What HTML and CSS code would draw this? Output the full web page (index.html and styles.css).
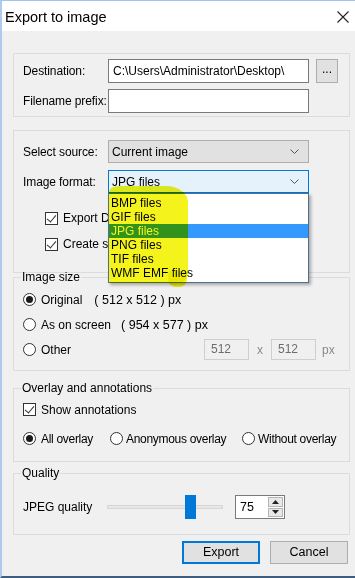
FILE: index.html
```html
<!DOCTYPE html>
<html lang="en">
<head>
    <meta charset="UTF-8">
    <title>Export to image</title>
    <link rel="stylesheet" href="styles.css">
</head>
<body>
    <div class="window">
        <div class="titlebar">
            <span class="title">Export to image</span>
            <svg class="close" width="12" height="12" viewBox="0 0 12 12"><path d="M0.5 0.5 L11.5 11.5 M11.5 0.5 L0.5 11.5" stroke="#222" stroke-width="1.1" fill="none"/></svg>
        </div>

        <div class="content">
            <div class="group g-dest">
                <div class="row">
                    <span class="label">Destination:</span>
                    <div class="field">C:\Users\Administrator\Desktop\</div>
                    <div class="btn-browse">...</div>
                </div>
                <div class="row">
                    <span class="label">Filename prefix:</span>
                    <div class="field"></div>
                </div>
            </div>

            <div class="group g-source">
                <div class="row">
                    <span class="label">Select source:</span>
                    <div class="combo">Current image<svg class="chev" width="9" height="5" viewBox="0 0 9 5"><path d="M0.5 0.5 L4.5 4.5 L8.5 0.5" stroke="#555" fill="none"/></svg></div>
                </div>
                <div class="row">
                    <span class="label">Image format:</span>
                    <div class="combo focus">JPG files<svg class="chev" width="9" height="5" viewBox="0 0 9 5"><path d="M0.5 0.5 L4.5 4.5 L8.5 0.5" stroke="#555" fill="none"/></svg></div>
                </div>
                <!-- the open list covers the rest of these two labels -->
                <div class="check-row first">
                    <span class="check on"></span><span class="check-text">Export D</span>
                </div>
                <div class="check-row">
                    <span class="check on"></span><span class="check-text">Create s</span>
                </div>
            </div>

            <fieldset class="group g-size">
                <legend>Image size</legend>
                <div class="opt-row">
                    <span class="radio on"></span><span class="opt-text">Original</span>
                    <span class="dims d1">( 512 x 512 ) px</span>
                </div>
                <div class="opt-row">
                    <span class="radio"></span><span class="opt-text">As on screen</span>
                    <span class="dims d2">( 954 x 577 ) px</span>
                </div>
                <div class="opt-row">
                    <span class="radio"></span><span class="opt-text">Other</span>
                    <div class="field small">512</div>
                    <span class="times">x</span>
                    <div class="field small">512</div>
                    <span class="unit">px</span>
                </div>
            </fieldset>

            <fieldset class="group g-overlay">
                <legend>Overlay and annotations</legend>
                <div class="opt-row">
                    <span class="check on"></span><span class="opt-text">Show annotations</span>
                </div>
                <div class="opt-row radios">
                    <span class="opt o1"><span class="radio on"></span>All overlay</span>
                    <span class="opt o2"><span class="radio"></span>Anonymous overlay</span>
                    <span class="opt o3"><span class="radio"></span>Without overlay</span>
                </div>
            </fieldset>

            <fieldset class="group g-quality">
                <legend>Quality</legend>
                <div class="opt-row">
                    <span class="q-label">JPEG quality</span>
                    <div class="slider"><span class="track"></span><span class="thumb"></span></div>
                    <div class="spin">
                        <span class="spin-val">75</span>
                        <span class="spin-btns">
                            <span class="spin-btn"><svg width="7" height="4" viewBox="0 0 7 4"><path d="M0 4 L3.5 0 L7 4 Z" fill="#222"/></svg></span>
                            <span class="spin-btn"><svg width="7" height="4" viewBox="0 0 7 4"><path d="M0 0 L3.5 4 L7 0 Z" fill="#222"/></svg></span>
                        </span>
                    </div>
                </div>
            </fieldset>

            <div class="buttons">
                <div class="btn default">Export</div>
                <div class="btn">Cancel</div>
            </div>
        </div>

        <ul class="dropdown">
            <li>BMP files</li>
            <li>GIF files</li>
            <li class="on">JPG files</li>
            <li>PNG files</li>
            <li>TIF files</li>
            <li>WMF EMF files</li>
        </ul>
        <div class="marker"></div>
        <div class="marker smear"></div>
    </div>
</body>
</html>
```

FILE: styles.css
```css
*{
    margin: 0;
    padding: 0;
    box-sizing: border-box;
    list-style-type: none;
}
body{
    font: 12px "Liberation Sans", Arial, sans-serif;
    color: #000;
}
.window{
    position: relative;
    width: 355px;
    height: 578px;
    border-top: 1px solid #a3c4ea;
    border-left: 2px solid #aecbee;
    border-bottom: 2px solid #3f5d7f;
    background-color: #f0f0f0;
    overflow: hidden;
}
.titlebar{
    display: flex;
    align-items: center;
    justify-content: space-between;
    height: 30px;
    padding: 2px 6px 0 3px;
    background-color: #fff;
}
.title{
    font-size: 14.5px;
}
.content{
    padding: 22px 5px 0 11px;
}
.group{
    border: 1px solid #dcdcdc;
    padding: 0 9px;
    min-width: 0;
}
.group legend{
    padding: 0 1px;
    margin-left: -2px;
    line-height: 12px;
}
.row{
    display: flex;
    align-items: center;
    height: 24px;
}
.label{
    flex: none;
    width: 85px;
    white-space: nowrap;
    letter-spacing: -0.1px;
}
.field{
    flex: none;
    width: 201px;
    height: 24px;
    padding: 0 4px;
    border: 1px solid #7a7a7a;
    background-color: #fff;
    line-height: 22px;
    white-space: nowrap;
    overflow: hidden;
}
.btn-browse{
    flex: none;
    width: 22px;
    height: 24px;
    margin-left: 7px;
    border: 1px solid #adadad;
    background-color: #e1e1e1;
    text-align: center;
    line-height: 18px;
}

/* group 1 */
.g-dest{
    height: 64px;
    padding-top: 5px;
}
.g-dest .row + .row{
    margin-top: 6px;
}

/* group 2 */
.g-source{
    height: 143px;
    margin-top: 13px;
    padding-top: 9px;
}
.g-source .row{
    height: 23px;
}
.g-source .row + .row{
    margin-top: 7px;
}
.combo{
    display: flex;
    align-items: center;
    justify-content: space-between;
    width: 201px;
    height: 23px;
    padding: 0 9px 0 3px;
    border: 1px solid #adadad;
    background-color: #e1e1e1;
}
.combo.focus{
    border-color: #0078d7;
    background-color: #e5f1fb;
}
.check-row{
    display: flex;
    align-items: center;
    height: 26px;
    padding-left: 22px;
}
.check-row.first{
    margin-top: 12px;
}
.check-text{
    width: 46px;
    white-space: nowrap;
    overflow: hidden;
}
.check{
    position: relative;
    flex: none;
    width: 13px;
    height: 13px;
    margin-right: 5px;
    border: 1px solid #333;
    background-color: #fff;
}
.check.on:after{
    position: absolute;
    left: 3px;
    top: 0;
    width: 4px;
    height: 8px;
    border: solid #333;
    border-width: 0 1.3px 1.3px 0;
    transform: rotate(40deg);
    content: '';
}
.radio{
    position: relative;
    flex: none;
    width: 13px;
    height: 13px;
    margin-right: 5px;
    border: 1px solid #333;
    border-radius: 50%;
    background-color: #fff;
}
.radio.on:after{
    position: absolute;
    left: 2px;
    top: 2px;
    width: 7px;
    height: 7px;
    border-radius: 50%;
    background-color: #1a1a1a;
    content: '';
}

/* image size */
.g-size{
    margin-top: -2px;
    padding-top: 4px;
    padding-bottom: 8px;
}
.opt-row{
    display: flex;
    align-items: center;
    height: 25px;
    white-space: nowrap;
}
.dims.d1{
    margin-left: 12px;
    font-size: 12.5px;
}
.dims.d2{
    margin-left: 10px;
    font-size: 12.5px;
}
.field.small{
    width: 45px;
    height: 21px;
    border-color: #cfcfcf;
    background-color: #f0f0f0;
    color: #6d6d6d;
    line-height: 19px;
    padding: 0 6px;
}
.field.small:first-of-type{
    margin-left: 133px;
}
.times{
    width: 22px;
    color: #8a8a8a;
    text-align: center;
}
.unit{
    margin-left: 6px;
    color: #8a8a8a;
}

/* overlay */
.g-overlay{
    margin-top: 11px;
    padding-top: 3px;
    padding-bottom: 10px;
}
.g-overlay .radios{
    margin-top: 4px;
    letter-spacing: -0.3px;
}
.opt{
    display: flex;
    align-items: center;
    flex: none;
}
.o1{
    width: 87px;
}
.o2{
    width: 132px;
}
.o2 .radio,
.o3 .radio{
    margin-right: 3px;
}

/* quality */
.g-quality{
    margin-top: 5px;
    padding-top: 16px;
    padding-bottom: 15px;
}
.g-quality .opt-row{
    height: 24px;
}
.q-label{
    width: 84px;
}
.slider{
    position: relative;
    width: 116px;
    height: 24px;
}
.track{
    position: absolute;
    left: 0;
    right: 0;
    top: 10px;
    height: 4px;
    border: 1px solid #d6d6d6;
    background-color: #e7e7e7;
}
.thumb{
    position: absolute;
    left: 78px;
    top: 0;
    width: 11px;
    height: 24px;
    background-color: #0078d7;
}
.spin{
    display: flex;
    width: 50px;
    height: 24px;
    margin-left: 12px;
    border: 1px solid #7a7a7a;
    background-color: #fff;
}
.spin-val{
    flex: 1;
    padding-left: 4px;
    line-height: 22px;
    font-size: 12.5px;
}
.spin-btns{
    display: flex;
    flex-direction: column;
    justify-content: center;
    gap: 1px;
    width: 16px;
    padding: 1px 1px 1px 0;
}
.spin-btn{
    display: flex;
    align-items: center;
    justify-content: center;
    height: 10px;
    border: 1px solid #b5b5b5;
    background-color: #e8e8e8;
}

/* buttons */
.buttons{
    display: flex;
    justify-content: flex-end;
    gap: 10px;
    margin-top: 6px;
    padding-right: 2px;
}
.btn{
    width: 78px;
    height: 23px;
    border: 1px solid #adadad;
    background-color: #e1e1e1;
    text-align: center;
    line-height: 21px;
    font-size: 12.5px;
}
.btn.default{
    border: 2px solid #0078d7;
    line-height: 19px;
}

/* popup list */
.dropdown{
    position: absolute;
    left: 106px;
    top: 192px;
    width: 201px;
    height: 90px;
    padding-top: 2px;
    border: 1px solid #4f6f92;
    background-color: #fff;
    box-shadow: 2px 2px 3px rgba(0,0,0,.3);
}
.dropdown li{
    height: 14px;
    padding-left: 2px;
    line-height: 14px;
}
.dropdown li.on{
    background-color: #3399ff;
    color: #fff;
}
/* yellow highlighter stroke drawn over the screenshot */
.marker{
    position: absolute;
    left: 107px;
    top: 185px;
    width: 79px;
    height: 97px;
    border-radius: 10px 22px 10px 3px / 6px 16px 10px 3px;
    background-color: #f4f41c;
    mix-blend-mode: multiply;
}
.marker.smear{
    left: 166px;
    top: 270px;
    width: 19px;
    height: 16px;
    border-radius: 3px 6px 8px 8px;
}
```
